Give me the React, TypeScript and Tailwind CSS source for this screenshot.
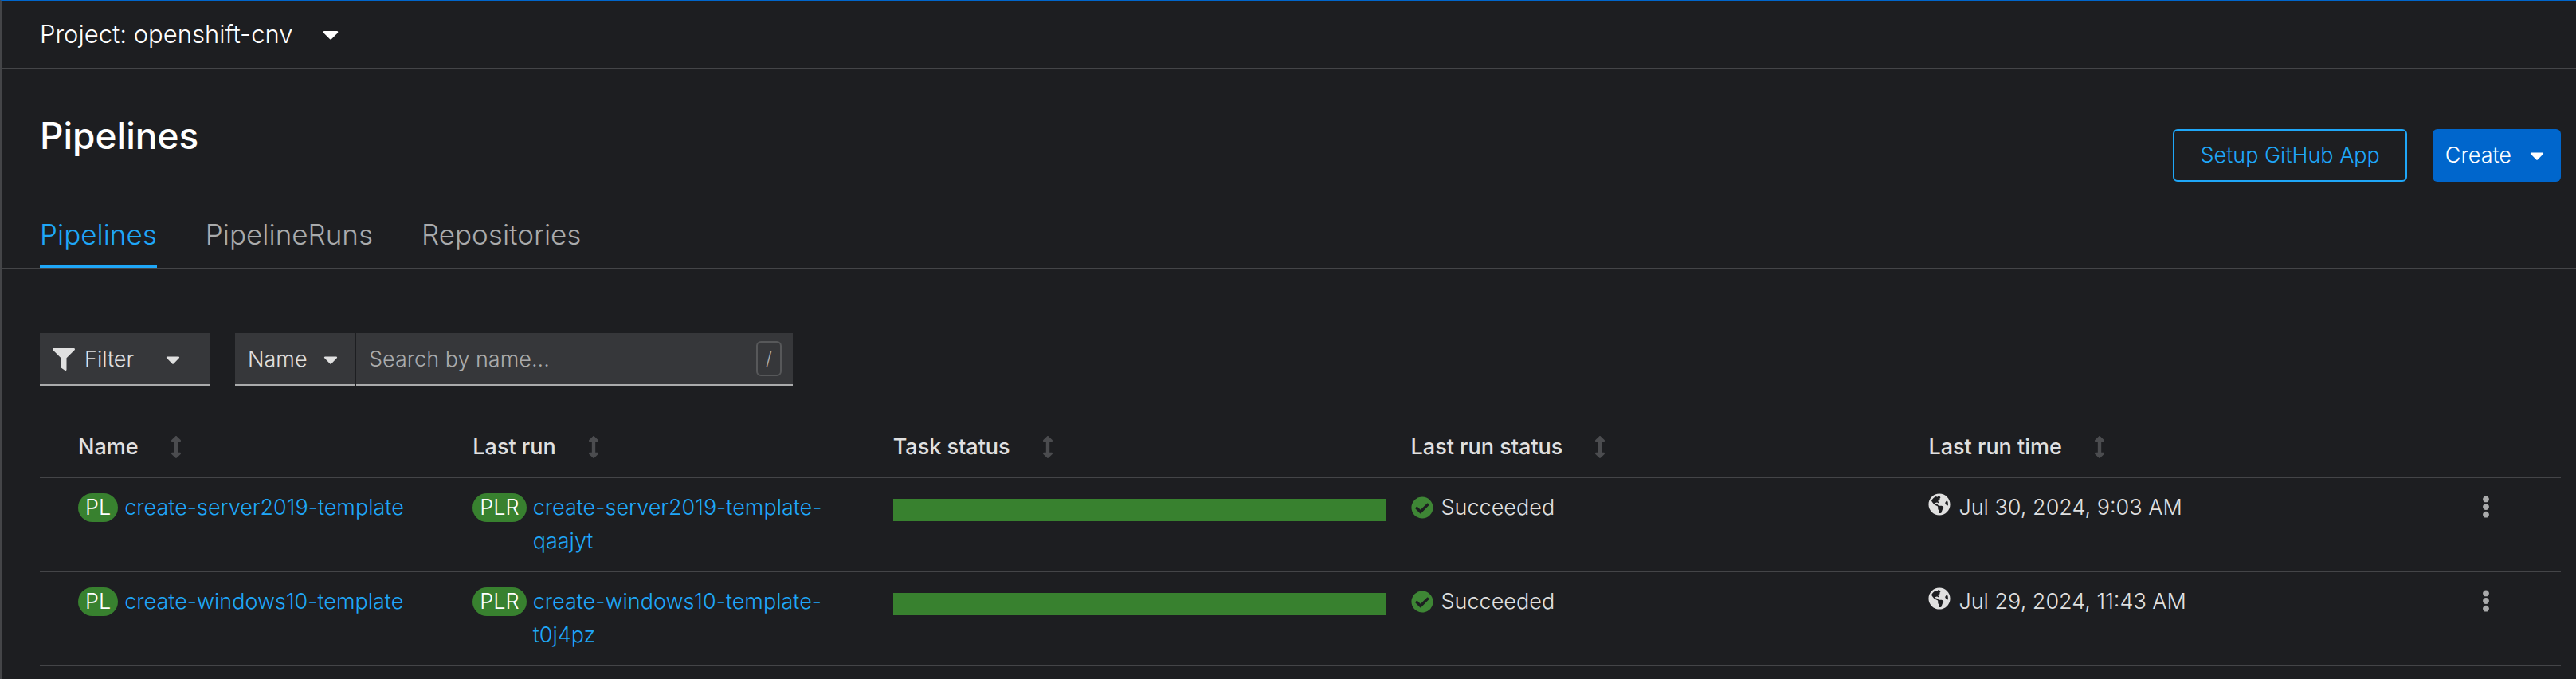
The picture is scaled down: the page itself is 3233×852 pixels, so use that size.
import { FaArrowsAltV, FaCaretDown, FaCheckCircle, FaEllipsisV, FaFilter, FaGlobeAmericas } from "react-icons/fa";

const runs = [
  { name: "create-server2019-template", run: "create-server2019-template-qaajyt", status: "Succeeded", time: "Jul 30, 2024, 9:03 AM" },
  { name: "create-windows10-template", run: "create-windows10-template-t0j4pz", status: "Succeeded", time: "Jul 29, 2024, 11:43 AM" },
];

const columns = [
  { label: "Name", width: "w-1/6 pl-12" },
  { label: "Last run", width: "w-1/6 pl-4" },
  { label: "Task status", width: "w-[20.54%] pl-4" },
  { label: "Last run status", width: "w-[20.54%] pl-4" },
  { label: "Last run time", width: "pl-4" },
];

const tabs = ["Pipelines", "PipelineRuns", "Repositories"];

function ResourceLink({ kind, name }: { kind: string; name: string }) {
  return (
    <div className="flex items-start gap-2">
      <span className="mt-[3px] h-9 shrink-0 rounded-[18px] bg-[#38812f] px-[9px] text-center leading-9 text-white">{kind}</span>
      <a href="#" className="break-words text-[#1fa7f8]">{name}</a>
    </div>
  );
}

export default function App() {
  return (
    <div className="min-h-screen border-t border-l-2 border-t-[#0066cc] border-l-[#444548] bg-[#1d1e21] font-['Inter',sans-serif] text-[27px] leading-[42px] font-light text-[#e0e0e0]">
      <header className="flex h-[86px] items-center border-b-2 border-[#444548] px-12">
        <button type="button" className="flex items-center gap-8 text-[31px] text-white">
          Project: openshift-cnv
          <FaCaretDown className="size-8" />
        </button>
      </header>

      <div className="flex items-start justify-between pt-[52px] pr-[19px] pl-12">
        <h1 className="text-[46px] leading-[62px] font-medium text-white">Pipelines</h1>
        <div className="mt-[23px] flex gap-8">
          <button type="button" className="h-[66px] rounded-md border-2 border-[#1fa7f8] px-8 text-[#1fa7f8]">
            Setup GitHub App
          </button>
          <button type="button" className="flex h-[66px] items-center gap-[18px] rounded-md bg-[#0066cc] px-4 text-white">
            Create
            <FaCaretDown className="size-7" />
          </button>
        </div>
      </div>

      <nav className="mt-[38px] flex gap-[61px] border-b-2 border-[#444548] px-12 text-[35px] leading-[56px]">
        {tabs.map((tab, i) => (
          <a
            key={tab}
            href="#"
            className={i === 0 ? "border-b-4 border-[#1fa7f8] pb-2.5 text-[#1fa7f8]" : "border-b-4 border-transparent pb-2.5 text-[#aaabac]"}
          >
            {tab}
          </a>
        ))}
      </nav>

      <main className="pt-20 pr-[19px] pl-12">
        <div className="flex">
          <button type="button" className="mr-8 flex h-[66px] w-[213px] items-center justify-between border-b-2 border-[#aaabac] bg-[#36373a] pt-0.5 pr-8 pl-4">
            <span className="flex items-center gap-3">
              <FaFilter className="size-7" />
              Filter
            </span>
            <FaCaretDown className="size-7" />
          </button>
          <button type="button" className="mr-0.5 flex h-[66px] w-[150px] items-center justify-between border-b-2 border-[#aaabac] bg-[#36373a] px-4 pt-0.5">
            Name
            <FaCaretDown className="size-7" />
          </button>
          <div className="flex h-[66px] w-[548px] items-center border-b-2 border-[#aaabac] bg-[#36373a] pr-3.5 pl-4">
            <input
              type="text"
              aria-label="Search by name"
              placeholder="Search by name..."
              className="min-w-0 flex-1 bg-transparent pt-0.5 outline-none placeholder:text-[#aaabac]"
            />
            <kbd className="flex h-11 w-8 items-center justify-center rounded-md border-2 border-[#57585a] font-['Inter',sans-serif] text-[24px] text-[#aaabac]">/</kbd>
          </div>
        </div>

        <table className="mt-8 w-full table-fixed border-collapse">
          <thead>
            <tr className="h-[83px] border-b-2 border-[#444548]">
              {columns.map((c) => (
                <th key={c.label} scope="col" className={c.width + " pt-2 text-left text-[27px] font-medium"}>
                  <button type="button" className="flex items-center gap-10">
                    {c.label}
                    <FaArrowsAltV className="h-7 w-3.5 text-[#4b4c4f]" />
                  </button>
                </th>
              ))}
              <th className="w-[108px]" aria-label="Actions" />
            </tr>
          </thead>
          <tbody>
            {runs.map((r) => (
              <tr key={r.name} className="border-b-2 border-[#444548] align-top">
                <td className="pt-4 pb-4 pl-12"><ResourceLink kind="PL" name={r.name} /></td>
                <td className="px-4 pt-4 pb-4"><ResourceLink kind="PLR" name={r.run} /></td>
                <td className="px-4 pt-[26px]"><div className="h-7 bg-[#38812f]" /></td>
                <td className="px-4 pt-4">
                  <div className="flex items-center gap-2.5"><FaCheckCircle className="size-7 text-[#3e8635]" />{r.status}</div>
                </td>
                <td className="px-4 pt-4">
                  <div className="flex items-start gap-2.5"><FaGlobeAmericas className="mt-[3px] size-7" />{r.time}</div>
                </td>
                <td className="pt-[22px]">
                  <button type="button" aria-label={"Actions for " + r.name} className="block text-[#aaabac]">
                    <FaEllipsisV className="size-7" />
                  </button>
                </td>
              </tr>
            ))}
          </tbody>
        </table>
      </main>
    </div>
  );
}
